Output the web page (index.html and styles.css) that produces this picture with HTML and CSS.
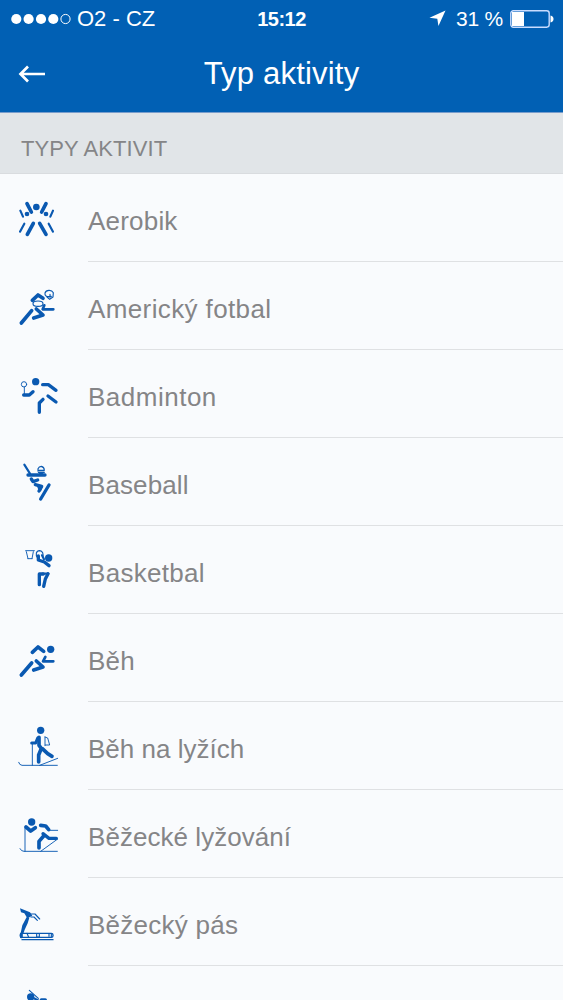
FILE: index.html
```
<!DOCTYPE html>
<html lang="cs">
<head>
<meta charset="utf-8">
<title>Typ aktivity</title>
<link rel="stylesheet" href="styles.css">
</head>
<body>
<header class="top">
  <div class="status">
    <div class="carrier">
      <svg class="signal" viewBox="0 0 60 12"><g fill="#fff"><circle cx="5.3" cy="6" r="5.1"/><circle cx="17.6" cy="6" r="5.1"/><circle cx="30" cy="6" r="5.1"/><circle cx="42.3" cy="6" r="5.1"/></g><circle cx="54.5" cy="6" r="4.6" fill="none" stroke="#fff"/></svg>
      <span class="operator">O2 - CZ</span>
    </div>
    <span class="clock">15:12</span>
    <div class="power">
      <svg class="location" viewBox="0 0 18 18"><path d="M17.5 .5 10 17 8.8 9.3 .5 8.2Z" fill="#fff"/></svg>
      <span class="percent">31 %</span>
      <svg class="battery" viewBox="0 0 44 18"><rect x=".8" y=".8" width="38.4" height="16.4" rx="2.6" fill="none" stroke="#c9dcff" stroke-width="1.4"/><path d="M2 2h12v14H2z" fill="#fff"/><path d="M40.5 5.5q3 .8 3 3.5t-3 3.5z" fill="#fff"/></svg>
    </div>
  </div>
  <nav class="bar">
    <svg class="back" viewBox="0 0 28 20"><path d="M27 10H2.500M10 2.500 2.500 10l7.500 7.500" fill="none" stroke="#fff" stroke-width="2.7"/></svg>
    <h1 class="title">Typ aktivity</h1>
  </nav>
</header>
<h2 class="section"><span>TYPY AKTIVIT</span></h2>
<ul class="list">
  <li class="row">
    <svg class="icon" viewBox="0 0 180 168"><path class="w9" d="M51 35 64 60M108 35 95 60M70 94 52 127M89 94 108 127"/><path class="w5" d="M31 56 39 74M129 56 121 74M43 95 30 119M116 95 129 119"/><g class="solid"><circle cx="79" cy="45" r="10"/><circle cx="51" cy="66" r="7"/><circle cx="108" cy="66" r="7"/></g></svg>
    <span class="label aerobik">Aerobik</span>
  </li>
  <li class="row">
    <svg class="icon" viewBox="0 0 180 168"><path class="w9" d="M67 61 84 45 99 55M65 92 34 129M79 87 99 105 71 114"/><path class="w6" d="M103 76 98 88H130"/><ellipse class="w3" cx="84" cy="71" rx="15" ry="8"/><path class="w3" d="M124 49C111 52 103 48 105 39 108 29 125 28 130 38L129 51 119 58 111 51M120 43v9"/></svg>
    <span class="label football">Americký fotbal</span>
  </li>
  <li class="row">
    <svg class="icon" viewBox="0 0 180 168"><circle class="w2" cx="42" cy="49" r="8"/><path class="w2" d="M43 57v22"/><path class="w8" d="M41 81H58L69 71M88 133V105L99 94M114 84 138 102M98 50H115L138 67"/><circle class="solid" cx="77" cy="41" r="11"/></svg>
    <span class="label badminton">Badminton</span>
  </li>
  <li class="row">
    <svg class="icon" viewBox="0 0 180 168"><path class="w5" d="M43 26 60 53"/><path class="w8" d="M54 57H105M64 69 69 77 83 72M76 86 95 91 87 105M117 87 92 129"/><path class="w3" d="M84 45V38Q87 31 94 31 103 33 103 43H84M86 49h17"/><path class="solid" d="M82 47H104L98 54H88ZM78 84 99 90 93 106 87 106Z"/></svg>
    <span class="label baseball">Baseball</span>
  </li>
  <li class="row">
    <svg class="icon" viewBox="0 12 180 168"><path class="w2" d="M47 32H73M49 35 54 56M70 35 66 56M54 56H66"/><path class="w3" d="M84 56C74 44 79 32 89 32 98 33 101 42 98 51"/><path class="w8" d="M85 48V60L103 66 117 77"/><path class="w5" d="M96 46 102 58"/><circle class="solid" cx="116" cy="54" r="11"/><path class="w8" d="M88 134V102H100M114 101 106 117 101 139"/><path class="w5" d="M98 101H115"/></svg>
    <span class="label basketball">Basketbal</span>
  </li>
  <li class="row">
    <svg class="icon" viewBox="0 0 180 168"><path class="w9" d="M67 61 84 45 101 58M65 93 34 129M79 87 99 105 71 114"/><path class="w6" d="M106 75 99 88H130"/><circle class="solid" cx="122" cy="52" r="11"/></svg>
    <span class="label">Běh</span>
  </li>
  <li class="row">
    <svg class="icon" viewBox="0 0 180 168"><circle class="solid" cx="92" cy="31" r="11"/><path class="w9" d="M87 52V76L94 85M94 85 86 105V126M97 86 113 101 126 109"/><path class="w7" d="M83 54 77 69H65"/><path class="w2" d="M67 69V136M105 51 113 54 119 75H106M105 51V77M26 127Q28 135 36 136H142M89 136 143 115"/></svg>
    <span class="label nordic">Běh na lyžích</span>
  </li>
  <li class="row">
    <svg class="icon" viewBox="0 0 180 168"><circle class="solid" cx="65" cy="42" r="11"/><path class="w9" d="M48 57 62 69 76 59M92 52 107 54 116 65M87 120V100L101 84"/><path class="w8" d="M99 77 117 91 139 91"/><path class="w2" d="M45 57V130M117 67H143M30 122Q34 130 42 130H142M92 130 143 93"/></svg>
    <span class="label skiing">Běžecké lyžování</span>
  </li>
  <li class="row">
    <svg class="icon" viewBox="0 0 180 168"><path class="solid" d="M30 37 60 49 67 59 52 67 43 52 33 49ZM50 63 58 65 53 82 44 101 40 113 32 111 37 88Z"/><path class="w3" d="M61 54 75 54 89 69M63 63 72 63 82 73"/><rect class="w4" x="31" y="112" width="98" height="12" rx="5"/><path class="w7" d="M34 114V122"/><path class="w3" d="M51 112 56 124M80 113V123H88V113M117 113V121M124 113V123"/><path class="deck" d="M36 131H129"/></svg>
    <span class="label">Běžecký pás</span>
  </li>
  <li class="row cut">
    <svg class="icon" viewBox="0 0 180 48"><path class="w3" d="M58 19 85 43"/><circle class="solid" cx="62" cy="39" r="11"/><path class="w8" d="M94 48H106"/><path class="w5" d="M72 43 86 50"/></svg>
  </li>
</ul>
</body>
</html>
```
FILE: styles.css
```
* { box-sizing: border-box; }
body {
  margin: 0;
  height: 1000px;
  overflow: hidden;
  background: #f9fbfd;
  color: #858587;
  font-family: "Liberation Sans", Arial, sans-serif;
}
svg { display: block; flex: none; overflow: hidden; }
.top {
  height: 113px;
  background: #0160b4;
  border-bottom: 1px solid #789dcc;
  color: #fff;
}
.status {
  height: 36px;
  padding: 0 9px 0 11px;
  display: grid;
  grid-template-columns: 1fr auto 1fr;
  align-items: center;
  line-height: 36px;
}
.carrier, .power { display: flex; align-items: center; }
.signal { width: 60px; height: 12px; }
.operator { padding-top: 1px; margin-left: 6px; font-size: 22px; }
.clock { margin-left: -2px; font-size: 20px; font-weight: 700; letter-spacing: -0.5px; }
.power { justify-content: flex-end; }
.location { width: 17px; height: 17px; margin-right: 10px; }
.percent { padding-top: 1px; font-size: 21px; letter-spacing: -0.2px; margin-right: 7px; }
.battery { width: 44px; height: 18px; }
.bar {
  height: 76px;
  padding: 0 18px;
  display: grid;
  grid-template-columns: 28px 1fr 28px;
  align-items: center;
}
.back { width: 28px; height: 20px; }
.title {
  margin: 0;
  text-align: center;
  font-size: 31px;
  font-weight: 400;
  line-height: 76px;
  letter-spacing: 0.2px;
}
.section {
  margin: 0;
  height: 61px;
  padding: 11px 21px 0;
  display: flex;
  align-items: center;
  background: #e1e5e8;
  border-bottom: 1px solid #d9dcdf;
  font-size: 22px;
  font-weight: 400;
  letter-spacing: 0.1px;
}
.list { margin: 0; padding: 0; list-style: none; }
.row { height: 88px; padding-left: 10px; display: flex; }
.icon { width: 60px; height: 56px; margin-top: 18px; }
.cut { height: 34px; }
.cut .icon { height: 16px; }
.icon * { fill: none; stroke: #0a59b1; stroke-linecap: round; stroke-linejoin: round; }
.icon .solid, .icon .solid * { fill: #0a59b1; stroke: none; }
.icon .w2 { stroke-width: 2.8; }
.icon .w3 { stroke-width: 3.4; }
.icon .w4 { stroke-width: 4; }
.icon .w5 { stroke-width: 6.5; }
.icon .w6 { stroke-width: 8; }
.icon .w7 { stroke-width: 9; }
.icon .w8 { stroke-width: 10; }
.icon .w9 { stroke-width: 11; }
.icon .deck { stroke-width: 4; }
.label {
  flex: 1;
  margin-left: 18px;
  padding-top: 6px;
  border-bottom: 1px solid #dfe1e3;
  font-size: 26px;
  line-height: 82px;
  letter-spacing: 0.25px;
}
.aerobik { letter-spacing: 0.2px; }
.football { letter-spacing: 0.38px; }
.badminton { letter-spacing: 0.5px; }
.baseball { letter-spacing: 0.1px; }
.basketball { letter-spacing: 0.3px; }
.nordic { letter-spacing: 0; }
.skiing { letter-spacing: 0.05px; }
```
